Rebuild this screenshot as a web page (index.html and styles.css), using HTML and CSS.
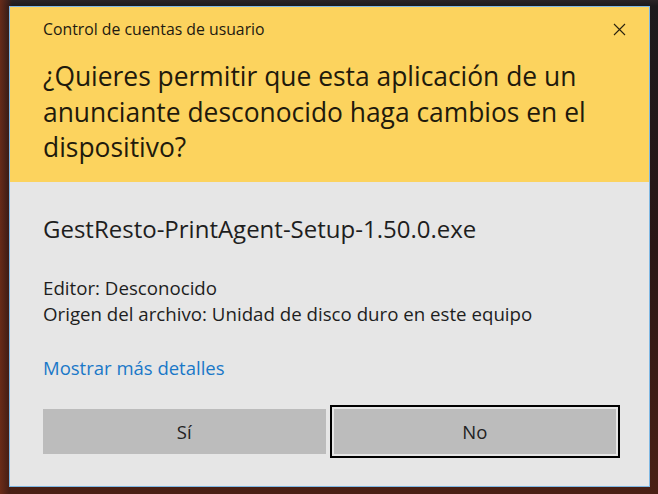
FILE: index.html
```html
<!DOCTYPE html>
<html lang="es">
<head>
<meta charset="utf-8">
<title>Control de cuentas de usuario</title>
<link rel="stylesheet" href="styles.css">
</head>
<body>
<div class="desktop">
  <div class="dialog">
    <div class="header">
      <div class="titlebar">
        <span class="title">Control de cuentas de usuario</span>
        <span class="close" aria-label="Cerrar">
          <svg width="13" height="13" viewBox="0 0 13 13"><path d="M1 1 L12 12 M12 1 L1 12" stroke="#2b2310" stroke-width="1.1" fill="none"/></svg>
        </span>
      </div>
      <h1 class="question">¿Quieres permitir que esta aplicación de un anunciante desconocido haga cambios en el dispositivo?</h1>
    </div>
    <div class="content">
      <div class="filename">GestResto-PrintAgent-Setup-1.50.0.exe</div>
      <div class="details">
        <div>Editor: Desconocido</div>
        <div>Origen del archivo: Unidad de disco duro en este equipo</div>
      </div>
      <a class="more" href="#">Mostrar más detalles</a>
      <div class="buttons">
        <button class="btn">Sí</button>
        <button class="btn focused">No</button>
      </div>
    </div>
  </div>
</div>
</body>
</html>
```
FILE: styles.css
```css
html, body {
  margin: 0;
  padding: 0;
}
body {
  width: 658px;
  height: 494px;
  overflow: hidden;
  font-family: "Open Sans", "Noto Sans", sans-serif;
  background: #1a1212;
}
.desktop {
  width: 658px;
  height: 494px;
  box-sizing: border-box;
  padding: 6px 8px 7px 9px;
  background:
    linear-gradient(90deg, rgba(110,45,25,0.9) 0px, rgba(70,30,22,0.6) 9px, transparent 12px),
    linear-gradient(180deg, #2a2426 0px, #1c1a1c 6px, #2a1614 50%, #4a2014 100%);
}
.dialog {
  width: 641px;
  height: 481px;
  box-sizing: border-box;
  border: 1px solid #7fb8e4;
  background: #e6e6e6;
  display: flex;
  flex-direction: column;
}
.header {
  background: #fcd35e;
  padding: 12px 23px 16px 33px;
  height: 175px;
  box-sizing: border-box;
}
.titlebar {
  display: flex;
  align-items: center;
  justify-content: space-between;
  height: 20px;
}
.title {
  font-size: 15.8px;
  color: #1e1a10;
  line-height: 20px;
}
.close {
  display: flex;
  width: 13px;
  height: 13px;
  margin-top: 1px;
}
.question {
  margin: 20px 0 0 0;
  font-weight: normal;
  font-size: 26.4px;
  line-height: 35.5px;
  color: #1f1a0c;
  width: 575px;
}
.content {
  padding: 33px 33px 0 33px;
  color: #1e1e1e;
}
.filename {
  font-size: 24px;
  line-height: 28px;
}
.details {
  margin-top: 32px;
  font-size: 18.7px;
  line-height: 26px;
}
.more {
  display: block;
  margin-top: 28px;
  font-size: 18.5px;
  line-height: 26px;
  color: #1a78c8;
  text-decoration: none;
}
.buttons {
  margin-top: 28px;
  display: flex;
  gap: 8px;
}
.btn {
  width: 283px;
  height: 45px;
  border: none;
  background: #bcbcbc;
  font-family: inherit;
  font-size: 18.5px;
  color: #222;
  padding: 0;
}
.focused {
  outline: 2px solid #000;
  outline-offset: 2px;
}
```
